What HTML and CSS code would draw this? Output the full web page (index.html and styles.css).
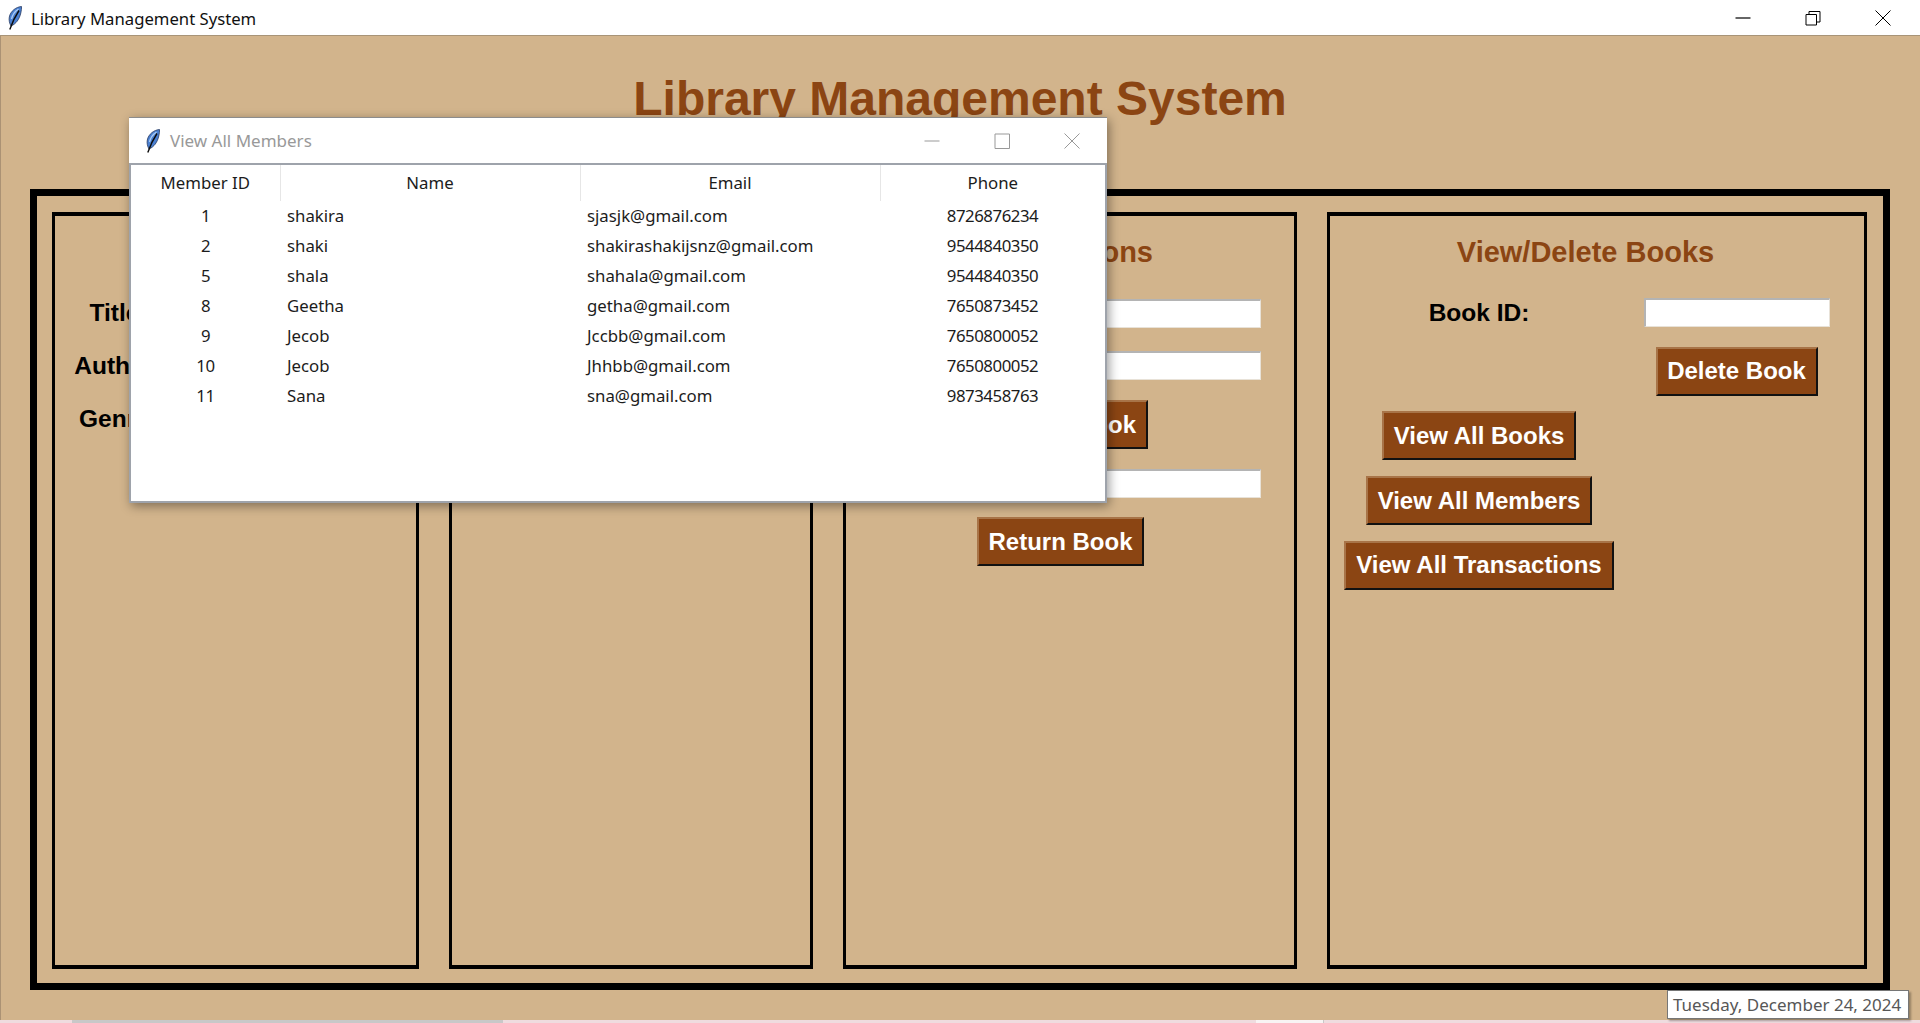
FILE: index.html
```html
<!DOCTYPE html>
<html lang="en">

<head>
    <meta charset="UTF-8">
    <meta name="viewport" content="width=device-width, initial-scale=1.0">
    <title>Library Management System</title>
    <link rel="stylesheet" href="styles.css">
</head>

<body>
    <svg class="defs" width="0" height="0" aria-hidden="true">
        <symbol id="feather" viewBox="0 0 14 24">
            <path d="M13.500 0.500C8 1 2.500 5 1.300 11C0.700 14 1.500 17.500 3 20C8 18 11.500 13 12.800 7C13.300 4.500 13.700 2.500 13.500 0.500Z" fill="#4a80d2" stroke="#26385f" stroke-width="0.8"/>
            <path d="M10.500 3C7.500 5 4.500 8.500 3.500 13" fill="none" stroke="#a9caf2" stroke-width="1.400"/>
            <path d="M11 4.500C8 9 5 14 1.800 23.500" fill="none" stroke="#0c0c0c" stroke-width="1.400"/>
        </symbol>
    </svg>

    <div class="app">
        <header class="titlebar">
            <svg class="feather" width="14" height="24"><use href="#feather"/></svg>
            <span class="titlebar-text">Library Management System</span>
            <div class="controls">
                <span class="control">
                    <svg width="16" height="16" viewBox="0 0 16 16"><path d="M0.500 8H15.500" stroke="currentColor" stroke-width="1.200"/></svg>
                </span>
                <span class="control">
                    <svg width="16" height="16" viewBox="0 0 16 16" fill="none" stroke="currentColor"><path d="M1 4.500H11.500V15H1Z"/><path d="M4 4.500V1.500H15V12H11.500"/></svg>
                </span>
                <span class="control">
                    <svg width="16" height="16" viewBox="0 0 16 16" fill="none" stroke="currentColor"><path d="M0.500 0.500L15.500 15.500M15.500 0.500L0.500 15.500"/></svg>
                </span>
            </div>
        </header>

        <main class="root">
            <h1 class="app-title">Library Management System</h1>

            <div class="frame">
                <section class="panel panel-add">
                    <label class="field-label">Title:</label>
                    <label class="field-label">Author:</label>
                    <label class="field-label">Genre:</label>
                </section>

                <section class="panel"></section>

                <section class="panel panel-transactions">
                    <h2 class="panel-title">Transactions</h2>
                    <input class="entry" type="text">
                    <input class="entry" type="text">
                    <button class="btn btn-issue">Issue Book</button>
                    <input class="entry" type="text">
                    <button class="btn btn-return">Return Book</button>
                </section>

                <section class="panel panel-view">
                    <h2 class="panel-title">View/Delete Books</h2>
                    <label class="field-label">Book ID:</label>
                    <input class="entry" type="text">
                    <button class="btn btn-delete">Delete Book</button>
                    <button class="btn btn-first">View All Books</button>
                    <button class="btn btn-first">View All Members</button>
                    <button class="btn btn-first">View All Transactions</button>
                </section>
            </div>

            <div class="date-tooltip">Tuesday, December 24, 2024</div>

            <div class="members-window">
                <div class="window-bar">
                    <svg class="feather feather-small" width="14" height="24"><use href="#feather"/></svg>
                    <span class="window-title">View All Members</span>
                    <div class="controls controls-inactive">
                        <span class="control">
                            <svg width="16" height="16" viewBox="0 0 16 16"><path d="M0.500 8H15.500" stroke="currentColor"/></svg>
                        </span>
                        <span class="control">
                            <svg width="16" height="16" viewBox="0 0 16 16" fill="none" stroke="currentColor"><path d="M1 1H15.500V15.500H1Z"/></svg>
                        </span>
                        <span class="control">
                            <svg width="16" height="16" viewBox="0 0 16 16" fill="none" stroke="currentColor"><path d="M0.500 0.500L15.500 15.500M15.500 0.500L0.500 15.500"/></svg>
                        </span>
                    </div>
                </div>
                <div class="window-body">
                    <table class="members">
                        <thead>
                            <tr>
                                <th>Member ID</th>
                                <th>Name</th>
                                <th>Email</th>
                                <th>Phone</th>
                            </tr>
                        </thead>
                        <tbody>
                            <tr><td>1</td><td>shakira</td><td>sjasjk@gmail.com</td><td>8726876234</td></tr>
                            <tr><td>2</td><td>shaki</td><td>shakirashakijsnz@gmail.com</td><td>9544840350</td></tr>
                            <tr><td>5</td><td>shala</td><td>shahala@gmail.com</td><td>9544840350</td></tr>
                            <tr><td>8</td><td>Geetha</td><td>getha@gmail.com</td><td>7650873452</td></tr>
                            <tr><td>9</td><td>Jecob</td><td>Jccbb@gmail.com</td><td>7650800052</td></tr>
                            <tr><td>10</td><td>Jecob</td><td>Jhhbb@gmail.com</td><td>7650800052</td></tr>
                            <tr><td>11</td><td>Sana</td><td>sna@gmail.com</td><td>9873458763</td></tr>
                        </tbody>
                    </table>
                </div>
            </div>
        </main>

        <div class="taskbar-strip">
            <span class="strip-tab"></span>
            <span class="strip-tab strip-tab-light"></span>
        </div>
    </div>
</body>

</html>
```

FILE: styles.css
```css
* {
    box-sizing: border-box;
}

html,
body {
    margin: 0;
    height: 100%;
    overflow: hidden;
}

.defs {
    position: absolute;
}

.app {
    display: flex;
    flex-direction: column;
    height: 1023px;
    font-family: "Liberation Sans", Arial, sans-serif;
}

/* window title bars */
.titlebar {
    display: flex;
    align-items: center;
    height: 36px;
    padding-left: 8px;
    background: white;
    border-bottom: 1px solid #a89478;
}

.feather {
    flex: none;
}

.titlebar-text {
    margin: 2px 0 0 9px;
    font-family: "Noto Sans", sans-serif;
    font-size: 16.7px;
    color: #111;
}

.controls {
    display: flex;
    margin-left: auto;
    padding-right: 2px;
    color: #000;
}

.control {
    display: flex;
    align-items: center;
    justify-content: center;
    width: 70px;
}

.controls-inactive {
    padding-right: 0;
    color: #999;
}

/* main window */
.root {
    position: relative;
    flex: 1;
    display: flex;
    flex-direction: column;
    padding: 36px 30px 30px 29px;
    background: #d2b48c;
    border-left: 1px solid #ab9274;
}

.app-title {
    margin: 0 0 63px;
    font-size: 48px;
    line-height: 54px;
    font-weight: bold;
    text-align: center;
    color: #8b4513;
}

.frame {
    flex: 1;
    display: grid;
    grid-template-columns: 367px 364px 454px 540px;
    column-gap: 30px;
    padding: 16px 15px 14px;
    border: 7px solid #000;
}

.panel {
    border: 3px solid #000;
    border-width: 4px 3px;
}

.panel-title {
    margin: 0;
    font-size: 29px;
    line-height: 32px;
    font-weight: bold;
    color: #8b4513;
}

.field-label {
    font-size: 24.5px;
    line-height: 27px;
    font-weight: bold;
    color: #000;
}

.entry {
    width: 186px;
    height: 29px;
    padding: 0 4px;
    background: white;
    border: 1px solid;
    border-width: 2px 1px 1px 2px;
    border-color: #b4b4b4 #e8e2d8 #e8e2d8 #b4b4b4;
}

.btn {
    height: 49px;
    padding: 0 10px;
    font-family: inherit;
    font-size: 24px;
    font-weight: bold;
    white-space: nowrap;
    color: white;
    background: #8b4513;
    border: 2px solid;
    border-color: #a87448 #111 #111 #a87448;
}

/* add book panel, only the labels show beside the top window */
.panel-add {
    display: flex;
    flex-direction: column;
    align-items: center;
    row-gap: 26px;
    width: 367px;
    padding: 83px 234px 0 0;
}

.panel-add .field-label {
    width: 130px;
    text-align: center;
    white-space: nowrap;
}

/* transactions panel */
.panel-transactions {
    display: flex;
    flex-direction: column;
    align-items: flex-end;
    padding: 20px 33px 0 0;
}

.panel-transactions .panel-title {
    margin: 0 108px 31px 0;
}

.panel-transactions .entry + .entry {
    margin-top: 23px;
}

.btn-issue {
    width: 175px;
    margin: 20px 113px 20px 0;
    text-align: right;
}

.btn-return {
    width: 167px;
    padding: 0;
    margin: 19px 117px 0 0;
}

/* view and delete panel */
.panel-view {
    display: grid;
    grid-template-columns: 298px 217px;
    grid-auto-rows: min-content;
    align-content: start;
    row-gap: 15.67px;
    padding-top: 20px;
}

.panel-view .panel-title {
    grid-column: 1 / 3;
    margin-bottom: 14px;
    padding-right: 4px;
    text-align: center;
}

.panel-view .field-label {
    align-self: center;
    text-align: center;
}

.panel-view .entry,
.btn-delete {
    justify-self: center;
}

.btn-delete {
    grid-column: 2;
    width: 162px;
    padding: 0;
    margin-top: 4.5px;
}

.btn-first {
    grid-column: 1;
    justify-self: center;
}

/* the view all members window on top */
.members-window {
    position: absolute;
    top: 81px;
    left: 128px;
    display: flex;
    flex-direction: column;
    width: 978px;
    height: 386px;
    background: white;
    border-top: 1px solid #8c8c8c;
    box-shadow: 2px 3px 10px rgba(0, 0, 0, 0.4);
}

.window-bar {
    display: flex;
    align-items: center;
    height: 45px;
    padding-left: 17px;
}

.window-title {
    margin-left: 10px;
    font-family: "Noto Sans", sans-serif;
    font-size: 17px;
    color: #999;
}

.window-body {
    flex: 1;
    border: 2px solid #9ea3ab;
}

.members {
    width: 974px;
    table-layout: fixed;
    border-collapse: collapse;
    font-family: "Noto Sans", sans-serif;
    font-size: 16.8px;
    line-height: 22px;
    color: #1c1c1c;
}

.members th {
    height: 36px;
    padding: 0;
    font-weight: normal;
    text-align: center;
    border-right: 1px solid #e6e6e6;
}

.members th:nth-child(1) {
    width: 149px;
}

.members th:nth-child(2),
.members th:nth-child(3) {
    width: 300px;
}

.members th:last-child {
    border-right: none;
}

.members td {
    height: 30px;
    padding: 0 7px;
}

.members td:nth-child(1),
.members td:nth-child(4) {
    text-align: center;
    letter-spacing: -0.45px;
}

/* desktop peeking out under the window */
.date-tooltip {
    position: absolute;
    top: 954px;
    left: 1666px;
    width: 242px;
    height: 29px;
    padding-left: 5px;
    font-family: "Noto Sans", sans-serif;
    font-size: 17px;
    line-height: 27px;
    color: #575757;
    background: white;
    border: 1px solid #767676;
    box-shadow: 2px 2px 2px rgba(0, 0, 0, 0.3);
}

.taskbar-strip {
    display: flex;
    height: 3px;
    padding-left: 72px;
    background: #efdcdf;
}

.strip-tab {
    width: 431px;
    background: #c8c8c8;
}

.strip-tab-light {
    width: 68px;
    margin-left: 753px;
    background: #f8f4f4;
    border-right: 1px solid #c8c8c8;
}
```
